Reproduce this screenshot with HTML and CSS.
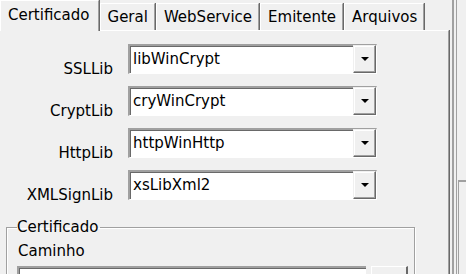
FILE: index.html
```html
<!DOCTYPE html>
<html lang="pt">
<head>
  <meta charset="UTF-8" />
  <title>Configuração</title>
  <link rel="stylesheet" href="styles.css">
</head>
<body>
  <div class="window">
    <div class="tabs">
      <div class="tab active">Certificado</div>
      <div class="tab">Geral</div>
      <div class="tab">WebService</div>
      <div class="tab">Emitente</div>
      <div class="tab">Arquivos</div>
    </div>

    <div class="panel">
      <div class="form">
        <label>SSLLib</label>
        <div class="combo"><span>libWinCrypt</span><i class="drop"></i></div>

        <label>CryptLib</label>
        <div class="combo"><span>cryWinCrypt</span><i class="drop"></i></div>

        <label>HttpLib</label>
        <div class="combo"><span>httpWinHttp</span><i class="drop"></i></div>

        <label>XMLSignLib</label>
        <div class="combo"><span>xsLibXml2</span><i class="drop"></i></div>
      </div>

      <fieldset class="group">
        <legend>Certificado</legend>
        <div class="caption">Caminho</div>
        <div class="path-row">
          <div class="edit"></div>
          <div class="btn"></div>
        </div>
      </fieldset>
    </div>
  </div>

  <div class="side">
    <div class="side-line"></div>
    <div class="side-box">
      <div class="side-inner"></div>
    </div>
  </div>
</body>
</html>
```

FILE: styles.css
```css
* {
  box-sizing: border-box;
}

body {
  margin: 0;
  background: #f0f0f0;
  font-family: 'DejaVu Sans', sans-serif;
  font-size: 15px;
  color: #000;
  display: flex;
  height: 274px;
  overflow: hidden;
}

.window {
  width: 449px;
  height: 274px;
  display: flex;
  flex-direction: column;
}

/* tab strip */
.tabs {
  display: flex;
  align-items: flex-end;
  height: 30px;
  flex-shrink: 0;
}

.tab {
  height: 27px;
  padding: 4px 6px 0 7px;
  border-top: 1px solid #fff;
  border-left: 1px solid #fff;
  border-right: 1px solid #a0a0a0;
  box-shadow: 1px 0 0 #696969;
  margin-right: 1px;
  white-space: nowrap;
}

.tab.active {
  height: 31px;
  margin-bottom: -1px;
  padding: 5px 8px 0 7px;
  position: relative;
  z-index: 1;
  background: #f0f0f0;
}

.panel {
  flex: 1;
  min-height: 0;
  overflow: hidden;
  border-top: 1px solid #fff;
  border-right: 1px solid #a0a0a0;
  box-shadow: 1px 0 0 #696969;
  padding-top: 13px;
}

/* combos */
.form {
  display: grid;
  grid-template-columns: 113px 249px;
  column-gap: 15px;
  row-gap: 12px;
}

.form label {
  text-align: right;
  align-self: start;
  line-height: 18px;
  padding-top: 16px;
  margin-bottom: -6px;
}

.combo {
  height: 30px;
  background: #fff;
  border-top: 2px solid #a0a0a0;
  border-left: 2px solid #a0a0a0;
  border-bottom: 1px solid #fff;
  border-right: 1px solid #fff;
  box-shadow: inset 1px 1px 0 #696969;
  display: flex;
  align-items: center;
  justify-content: space-between;
  padding-left: 3px;
}

.combo span {
  margin-top: -1px;
}

.drop {
  width: 23px;
  height: 28px;
  margin-top: -1px;
  background: #f0f0f0;
  border-top: 1px solid #f0f0f0;
  border-left: 1px solid #f0f0f0;
  border-right: 1px solid #696969;
  border-bottom: 1px solid #696969;
  box-shadow: inset -1px -1px 0 #a0a0a0, inset 1px 1px 0 #fff;
  display: flex;
  align-items: center;
  justify-content: center;
}

.drop::after {
  content: "";
  border-left: 4px solid transparent;
  border-right: 4px solid transparent;
  border-top: 4px solid #000;
}

/* group box */
.group {
  margin: 18px 33px 0 6px;
  padding: 6px 0 0 11px;
  border: 1px solid #a0a0a0;
  box-shadow: inset 1px 1px 0 #fff, 1px 1px 0 #fff;
  height: 80px;
}

.group legend {
  padding: 0 1px 0 0;
  margin-left: -1px;
  line-height: 18px;
}

.caption {
  line-height: 18px;
}

.path-row {
  display: flex;
  gap: 5px;
  margin-top: 6px;
}

.edit {
  width: 349px;
  height: 24px;
  margin-left: -1px;
  background: #fff;
  border-top: 2px solid #a0a0a0;
  border-left: 2px solid #a0a0a0;
  box-shadow: inset 1px 1px 0 #696969;
}

.btn {
  width: 37px;
  height: 24px;
  border-top: 1px solid #fff;
  border-left: 1px solid #fff;
  border-right: 2px solid #696969;
}

/* right-hand neighbour */
.side {
  flex: 1;
  display: flex;
  padding-left: 3px;
}

.side-line {
  width: 5px;
  border-left: 2px solid #a0a0a0;
  border-right: 1px solid #a0a0a0;
}

.side-box {
  flex: 1;
  margin-left: 1px;
  padding-top: 180px;
}

.side-inner {
  height: 100%;
  border-top: 2px solid #a0a0a0;
  border-left: 1px solid #a0a0a0;
}
```
